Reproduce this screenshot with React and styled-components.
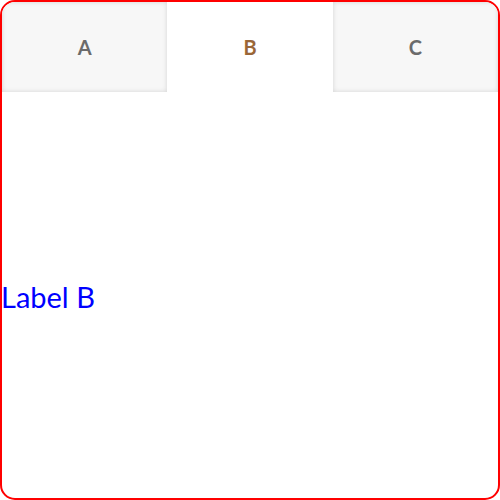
import React, { useState } from "react";
import styled, { createGlobalStyle } from "styled-components";

const GlobalStyle = createGlobalStyle`
    html, body {
        margin: 0;
        padding: 0;
        background: #ffffff;
    }
    body {
        font-family: Lato, "Liberation Sans", sans-serif;
    }
`;

const tabs = ["A", "B", "C"];

export default function App() {
    const [active, setActive] = useState(1);
    return (
        <>
            <GlobalStyle />
            <Frame>
                <TabBar>
                    {tabs.map((t, i) => (
                        <Tab key={t} active={i === active} onClick={() => setActive(i)}>
                            {t}
                        </Tab>
                    ))}
                </TabBar>
                <Panel>
                    <Label>Label {tabs[active]}</Label>
                </Panel>
            </Frame>
        </>
    );
}

const Frame = styled.div`
    box-sizing: border-box;
    width: 500px;
    height: 500px;
    border: 2px solid #ff0000;
    border-radius: 15px;
    overflow: hidden;
    display: flex;
    flex-direction: column;
`;

const TabBar = styled.div`
    display: flex;
    height: 90px;
    flex-shrink: 0;
`;

const Tab = styled.button.withConfig({ shouldForwardProp: (p) => p !== "active" })`
    flex: 1;
    border: none;
    margin: 0;
    padding: 0;
    cursor: pointer;
    font-family: Lato, "Liberation Sans", sans-serif;
    font-size: 20px;
    font-weight: 700;
    color: ${(p) => (p.active ? "#9a6637" : "#6b6b6b")};
    background: ${(p) => (p.active ? "#ffffff" : "#f7f7f7")};
    box-shadow: ${(p) => (p.active ? "none" : "inset 0 0 5px rgba(0, 0, 0, 0.14)")};
`;

const Panel = styled.div`
    flex: 1;
    display: flex;
    align-items: center;
    padding-top: 3px;
`;

const Label = styled.span`
    font-size: 29px;
    color: #0000ff;
    margin-left: -1px;
`;
